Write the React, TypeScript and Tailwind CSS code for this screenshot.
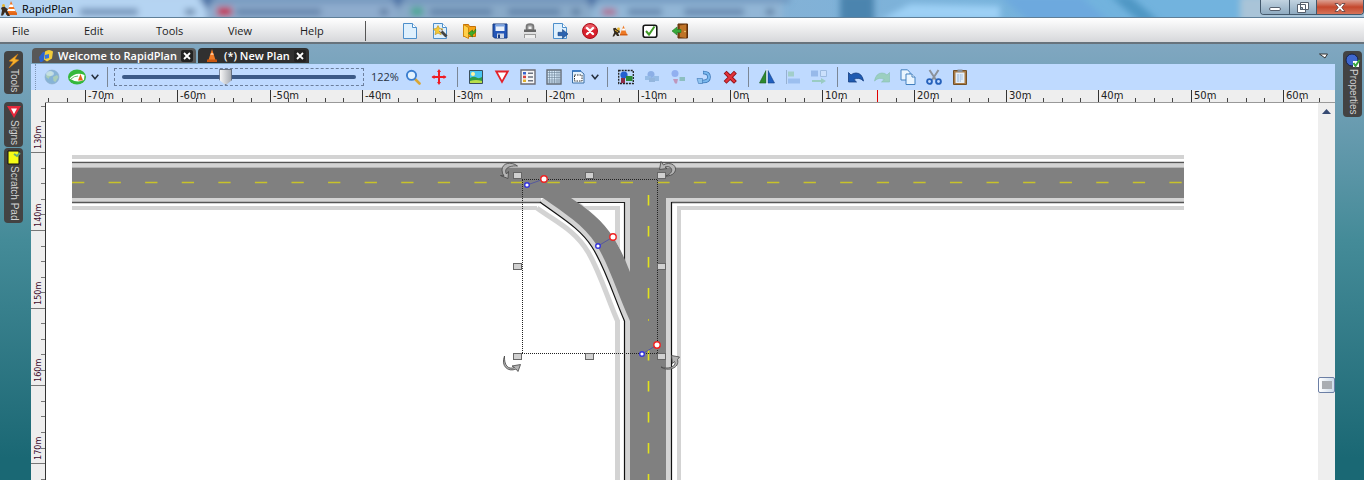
import React from "react";

type Kids = { children: React.ReactNode };

function Icon({ children, size = 16 }: Kids & { size?: number }) {
  return (
    <svg width={size} height={size} viewBox="0 0 16 16" aria-hidden="true" className="shrink-0">
      {children}
    </svg>
  );
}

const page = <path d="M1.5.5h9l4 4v11h-13z" fill="#dff0fd" stroke="#4d8fcb" />;
const pageFold = <path d="M10.5.5v4h4" fill="#fff" stroke="#4d8fcb" />;

const icons: Record<string, React.ReactNode> = {
  new: <>{page}{pageFold}</>,
  wizard: (
    <>
      {page}{pageFold}
      <path d="M6 2.500l1.600 3 3.400.4-2.400 2.400.6 3.400L6 10.100l-3 1.600.6-3.400L1.200 5.900l3.200-.4z" fill="#f5c935" stroke="#b98d1c" strokeWidth=".6" />
      <path d="M8 7l6.500 6.500" stroke="#444" strokeWidth="2.800" />
      <path d="M7.500 6.500l2 2" stroke="#ddd" strokeWidth="2.200" />
    </>
  ),
  open: (
    <>
      <path d="M1.500 1.500h5l1 2h6v10h-12z" fill="#f7a414" stroke="#c2700a" />
      <path d="M1.500 1.500l5 3v11l-5-2.500z" fill="#ffd04a" stroke="#cf860f" />
      <path d="M13.500 6c1 3-1 5-3 5.500V14l-4-3.700 4-3.300v2c1.500-.3 2.500-1.500 3-3z" fill="#3fae2b" stroke="#217915" strokeWidth=".6" />
    </>
  ),
  save: (
    <>
      <path d="M1 1h14v14H2.500L1 13.500z" fill="#2456b8" stroke="#173a80" />
      <path d="M3.500 1.500h9V8h-9z" fill="#e9f0fb" />
      <path d="M3.500 1.500h9v2h-9z" fill="#7aa2e0" />
      <path d="M5 10.500h7V15H5z" fill="#cdd6e6" />
      <path d="M6 11.500h2V15H6z" fill="#1c3c80" />
    </>
  ),
  print: (
    <>
      <path d="M4.500 7V3.500Q4.500 1 8 1t3.500 2.500V7" fill="#999" stroke="#777" strokeWidth="1.600" />
      <path d="M6.500 3.500h3V6h-3z" fill="#eee" />
      <path d="M2 6.500h12V9H2z" fill="#666" />
      <path d="M1 9.500h14v1.300H1z" fill="#ddd" />
      <path d="M2 11h12v4H2z" fill="#999" />
      <path d="M3 12h10v3H3z" fill="#eee" />
    </>
  ),
  export: (
    <>
      {page}{pageFold}
      <path d="M6 9.300h4.500V6.500L16 11l-5.500 4.500v-2.800H6z" fill="#2c63b0" stroke="#17417e" strokeWidth=".6" />
    </>
  ),
  close: (
    <>
      <circle cx="8" cy="8" r="7.500" fill="#d8202c" stroke="#a8111b" />
      <path d="M2 6a6.200 6.200 0 0 1 12 0q-6 2-12 0z" fill="#f0707a" opacity=".7" />
      <path d="M5 5l6 6M11 5l-6 6" stroke="#fff" strokeWidth="2.400" strokeLinecap="round" />
    </>
  ),
  worker: (
    <>
      <path d="M11.500 2.500l3.500 9H8z" fill="#ee7a25" />
      <path d="M10.500 5.500h2.200l.7 2h-3.700z" fill="#fff" />
      <path d="M8 11h7.500v1.500H8z" fill="#d35e12" />
      <path d="M1 5.500l2.500-.7L5 6.500l2.500 1 .5 2-2 .5 1.500 3H5L3.800 11 2 13.500H.5l1.700-4z" fill="#33291d" />
      <circle cx="6.500" cy="6" r="1.400" fill="#e8b42b" />
      <path d="M3 7l3 2" stroke="#e8b42b" />
    </>
  ),
  check: (
    <>
      <rect x="1.200" y="2.200" width="13.600" height="12" rx="2" fill="#fff" stroke="#151515" strokeWidth="1.600" />
      <path d="M4 8l3 3.500L12.500 3.500" fill="none" stroke="#3f9a26" strokeWidth="2" />
    </>
  ),
  exit: (
    <>
      <path d="M6 1h9.500v14H6z" fill="#8a4a14" stroke="#5d2f08" />
      <path d="M8 2.500l6-1v13.500l-6-1z" fill="#bf7428" />
      <circle cx="13" cy="8.500" r=".8" fill="#f9d77a" />
      <path d="M9 6.500H5V4L0 8l5 4V9.500h4z" fill="#38a83a" stroke="#1f7a22" strokeWidth=".6" />
    </>
  ),
  globe: (
    <>
      <circle cx="8" cy="8" r="7" fill="#86b3d6" stroke="#8fafca" strokeWidth=".6" />
      <path d="M2.500 5Q6 1 8 3t-1 4-2 3-3-2zM9 8l4-2 1.500 2-3 5-2-1z" fill="#a9cdb9" />
      <ellipse cx="6" cy="4.500" rx="4" ry="2.500" fill="#d9ecf8" opacity=".6" />
    </>
  ),
  streets: (
    <>
      <ellipse cx="9" cy="8" rx="9" ry="7.500" fill="#35b83c" />
      <path d="M1.500 9.500q6-7 15-3.500l-.5 5q-7 3.500-14.500-1.500z" fill="#fff" />
      <path d="M3 10q3-3 7-3" stroke="#63c268" fill="none" />
      <path d="M12.500 5l2.500 6.500h-5z" fill="#e2661c" />
    </>
  ),
  magnify: (
    <>
      <path d="M10 10l4.500 4.500" stroke="#d9a635" strokeWidth="2.600" strokeLinecap="round" />
      <circle cx="6.500" cy="6.300" r="4.600" fill="#e3f3ff" stroke="#3b7ed0" strokeWidth="1.900" />
    </>
  ),
  pan: (
    <>
      <path d="M8 2v12M1.500 8h13" stroke="#ee1c24" strokeWidth="2" />
      <path d="M8 0l2 3H6zM8 16l2-3H6zM.500 8l3-2v4zM15.500 8l-3-2v4z" fill="#ee1c24" />
    </>
  ),
  image: (
    <>
      <path d="M1.500 1.500h13v13h-13z" fill="#49c4f2" stroke="#3b4f5c" />
      <path d="M2 9q4-2 6.500-.5T14 8v6H2z" fill="#2e9b46" />
      <path d="M2 12q6-2 12 0v2H2z" fill="#b8df4a" />
      <circle cx="5" cy="5" r="2" fill="#fff3a0" />
    </>
  ),
  yield: <path d="M2.200 2.500h11.600L8 13z" fill="#fff" stroke="#e3222b" strokeWidth="1.800" />,
  legend: (
    <>
      <path d="M1 1h14v14H1z" fill="#f6f6f6" stroke="#6c6c74" strokeWidth="1.400" />
      <path d="M3 3h3v2.500H3z" fill="#3a66cf" />
      <path d="M3 6.700h3v2.500H3z" fill="#d6423f" />
      <path d="M3 10.500h3V13H3z" fill="#e0b02b" />
      <path d="M8 4.200h5M8 8h5M8 11.800h5" stroke="#6c7381" strokeWidth="1.400" />
    </>
  ),
  grid: (
    <>
      <path d="M1 1h14v14H1z" fill="#d5e8f8" stroke="#666d77" strokeWidth="1.400" />
      <path d="M3.500 1v14M6 1v14M8.500 1v14M11 1v14M13 1v14M1 3.500h14M1 6h14M1 8.500h14M1 11h14M1 13h14" stroke="#6b8196" strokeWidth=".6" />
    </>
  ),
  area: (
    <>
      <path d="M2.500 2h8l3.500 3v9H2.500z" fill="#e6f2fc" stroke="#3c70a8" />
      <path d="M4.500 6h7.500v6H4.500z" fill="#fff" stroke="#333" strokeDasharray="1.500 1" />
      <path d="M2 2h9" stroke="#2c6fbc" strokeWidth="1.500" />
    </>
  ),
  group: (
    <>
      <path d="M.700 1.500h14.600v13H.7z" fill="none" stroke="#222" strokeWidth="1.300" strokeDasharray="2 1" />
      <circle cx="6" cy="6" r="3.600" fill="#2460cf" />
      <path d="M8 7h6.500v5H8z" fill="#2c8a36" />
      <path d="M3 9h4v5H3z" fill="#8b2d46" />
    </>
  ),
  front: (
    <g opacity=".5">
      <circle cx="7" cy="5.500" r="3.500" fill="#5b86cf" />
      <path d="M1 7h6v4H1zM9 7h6v5H9z" fill="#6f9fcf" />
      <path d="M5 9h6v4H5z" fill="#6b93bd" />
    </g>
  ),
  back: (
    <g opacity=".45">
      <circle cx="5" cy="4.500" r="3.500" fill="#5b7ee0" />
      <path d="M9.500 8H15v4H9.500z" fill="#4fa074" />
      <path d="M3 10h5l-1 4.500H5z" fill="#c0476c" />
    </g>
  ),
  rotate: (
    <>
      <path d="M7 3.500Q13 3.500 13 8T7 12.500H4" fill="none" stroke="#3a74b4" strokeWidth="3.600" />
      <path d="M7.500 3.500Q13 3.500 13 8T7 12.500H3.500" fill="none" stroke="#79b8ee" strokeWidth="2.200" />
      <path d="M1 9.500h5.500v5H2.500z" fill="#8fc4f0" stroke="#3a74b4" strokeWidth=".6" />
    </>
  ),
  remove: (
    <>
      <path d="M4.500 4.500l7.500 7.500M12 4.500L4.500 12" stroke="#8c1116" strokeWidth="4" strokeLinecap="square" />
      <path d="M4.500 4.500l7.500 7.500M12 4.500L4.500 12" stroke="#e3323a" strokeWidth="2.400" strokeLinecap="square" />
    </>
  ),
  mirror: (
    <>
      <path d="M7 1.500v12.500H.500z" fill="#2f8a2f" stroke="#1c5b1f" strokeWidth=".6" />
      <path d="M9 1.500v12.500h6.500z" fill="#1f5fc0" stroke="#153f85" strokeWidth=".6" />
      <path d="M8 0v16" stroke="#e5ecf5" />
    </>
  ),
  align: (
    <g opacity=".6">
      <path d="M1.500 1v14" stroke="#7d97b4" />
      <path d="M3 2.500h6v5H3z" fill="#8fc7a8" />
      <path d="M3 9.500h12v5H3z" fill="#85aee6" />
    </g>
  ),
  spread: (
    <g opacity=".6">
      <path d="M0 1.500h7v6H0z" fill="#7da4dd" />
      <path d="M9.500 1.500h6v6h-6z" fill="#d3e4fb" stroke="#88a8cc" />
      <path d="M1 11h9V9l5 3-5 3v-2H1z" fill="#83c49c" />
    </g>
  ),
  undo: <path d="M.500 3.500v9.500h8L5.800 10.500Q11 7.500 15.500 12 14 4 8 4 5 4 3 6z" fill="#1f5bb2" stroke="#143e80" strokeWidth=".8" />,
  redo: <path d="M15.500 3.500v9.500h-8l2.700-2.500Q5 7.500.5 12 2 4 8 4q3 0 5 2z" fill="#9bcfc0" stroke="#86bfae" strokeWidth=".6" />,
  copy: (
    <>
      <path d="M1 .800h6.500L10 3.500V11H1z" fill="#eaf5fe" stroke="#4380bf" />
      <path d="M6 5h6l3 3v7.500H6z" fill="#eaf5fe" stroke="#4380bf" />
      <path d="M12 5v3h3" fill="#fff" stroke="#4380bf" />
    </>
  ),
  cut: (
    <>
      <path d="M3.500 1l6.500 10M12.500 1L6 11" stroke="#8b929b" strokeWidth="2" />
      <circle cx="3.500" cy="12.500" r="2.400" fill="none" stroke="#2561bb" strokeWidth="1.900" />
      <circle cx="12.500" cy="12.500" r="2.400" fill="none" stroke="#2561bb" strokeWidth="1.900" />
    </>
  ),
  paste: (
    <>
      <path d="M1.500 1.500h13v14h-13z" fill="#a87a45" stroke="#725027" />
      <path d="M3.500 3.500h9v10.500h-9z" fill="#e3eefa" />
      <path d="M5 6h6M5 8h6M5 10h6M5 12h4" stroke="#8fb0d6" strokeDasharray="2 .7" />
      <path d="M5.500.500h5v2.500h-5z" fill="#888f98" />
    </>
  ),
};

const fileActions: [string, string][] = [
  ["new", "New"], ["wizard", "Plan wizard"], ["open", "Open"], ["save", "Save"], ["print", "Print"],
  ["export", "Export"], ["close", "Close"], ["worker", "Work zone"], ["check", "Validate"], ["exit", "Exit"],
];

function Tool({ name, label, className = "w-[26px]" }: { name: string; label: string; className?: string }) {
  return (
    <button type="button" aria-label={label} className={`flex h-6 shrink-0 items-center justify-center ${className}`}>
      {name === "streets" ? (
        <svg width="18" height="16" viewBox="0 0 18 16" aria-hidden="true">{icons.streets}</svg>
      ) : (
        <Icon>{icons[name]}</Icon>
      )}
    </button>
  );
}

function Separator({ className = "w-[11px]" }: { className?: string }) {
  return (
    <span className={`flex h-5 shrink-0 justify-center ${className}`}>
      <span className="w-px bg-[#7b8796]" />
    </span>
  );
}

function Caret({ className }: { className: string }) {
  return (
    <button type="button" aria-label="More options" className={`flex h-6 shrink-0 items-center justify-center ${className}`}>
      <svg width="8" height="6" viewBox="0 0 8 6"><path d="M.700.800L4 4.800 7.300.8" fill="none" stroke="#26303f" strokeWidth="1.500" /></svg>
    </button>
  );
}

function TitleBar() {
  return (
    <header className="relative flex h-[18px] shrink-0 items-start justify-between overflow-hidden border-b border-[#5f7f98] bg-linear-to-r from-[#bcd6ee] from-0% via-[#8fb0d0] via-40% to-[#72b3de] to-80%">
      <svg className="absolute inset-0 h-full w-full" aria-hidden="true">
        <defs>
          <filter id="soft" x="-20%" y="-100%" width="140%" height="300%"><feGaussianBlur stdDeviation="3" /></filter>
        </defs>
        <g filter="url(#soft)">
          <rect x="-10" y="-4" width="216" height="28" fill="#b5d4f2" />
          <rect x="206" y="-4" width="190" height="28" fill="#8eaccd" />
          <rect x="396" y="-4" width="196" height="28" fill="#88a9c8" />
          <rect x="592" y="-4" width="190" height="28" fill="#92b6d6" />
          <path d="M198-6h18l-9 16zM390-6h16l-8 15zM584-6h16l-8 15z" fill="#3e639c" />
          <rect x="200" y="-4" width="590" height="7" fill="#5f86b1" opacity=".6" />
          <rect x="840" y="-6" width="34" height="32" fill="#4c84ae" />
          <path d="M880 20h120V6l-90-2z" fill="#9dd0f5" />
          <path d="M1000-4h80l30 26h-80z" fill="#6da9de" />
          <path d="M1110-4h20l30 26h-20z" fill="#4f97c4" />
          <rect x="1240" y="-4" width="140" height="28" fill="#a9c4d8" />
          <path d="M80 12h58M236 12h85M430 12h62M508 12h52M628 12h34M684 12h60" stroke="#56779f" strokeWidth="7" opacity=".7" />
          <path d="M185 12h10M380 12h8M572 12h8M766 12h8" stroke="#4d6c92" strokeWidth="6" opacity=".8" />
          <rect x="217" y="7" width="15" height="9" fill="#c22a50" />
          <rect x="411" y="7" width="12" height="9" fill="#4aa694" />
          <rect x="602" y="9" width="14" height="6" fill="#b45f85" />
        </g>
      </svg>
      <div className="relative flex h-[17px] items-center gap-[5px] pl-px">
        <Icon>
          <path d="M10 0l5.500 12H6z" fill="#f07522" />
          <path d="M8.800 3.500h2.800l1 2.500H7.800zM7 8h6.500l.8 2H6.200z" fill="#fff" />
          <path d="M5 11.500h11V14H5z" fill="#e0661a" />
          <path d="M0 7l3-2 2 2 2 1-1 1.500 3 5.500H6.500L4 11l-2 3.500H0l1-5z" fill="#3a2c20" />
          <circle cx="2.500" cy="4.500" r="1.500" fill="#e8b42b" />
        </Icon>
        <h1 className="text-[11px] leading-4 text-black">RapidPlan</h1>
      </div>
      <div className="relative flex h-[15px] overflow-hidden rounded-b border border-t-0 border-[#43586b]">
        <button type="button" aria-label="Minimize" className="flex w-7 items-center justify-center bg-linear-to-b from-[#c2d3e0] to-[#8fabc1]">
          <span className="mt-1 h-1 w-3 rounded-xs border border-[#555f6d] bg-white" />
        </button>
        <button type="button" aria-label="Restore" className="flex w-7 items-center justify-center border-x border-[#43586b] bg-linear-to-b from-[#c2d3e0] to-[#8fabc1]">
          <svg width="12" height="11" viewBox="0 0 12 11">
            <path d="M3.500.500h8v7h-8zM.500 2.500h8v8h-8z" fill="#fff" stroke="#555f6d" />
            <path d="M3.500 5.500h2v2h-2z" fill="#9bb3c7" stroke="#555f6d" />
          </svg>
        </button>
        <button type="button" aria-label="Close window" className="flex w-[46px] items-center justify-center bg-linear-to-b from-[#dba092] via-[#c4472c] to-[#d67359]">
          <svg width="12" height="9" viewBox="0 0 12 9">
            <path d="M1 .500h3l2 2.300L8 .5h3L7.800 4.500 11 8.500H8L6 6.200 4 8.500H1l3.200-4z" fill="#fff" stroke="#5b3a3c" strokeWidth=".8" />
          </svg>
        </button>
      </div>
    </header>
  );
}

function MenuBar() {
  return (
    <div className="flex h-[26px] shrink-0 items-center border-b-2 border-[#68737c] bg-linear-to-b from-white to-[#d6d7da] pt-px">
      <nav className="flex">
        {["File", "Edit", "Tools", "View", "Help"].map((m) => (
          <button key={m} type="button" className="w-[72px] pl-3 text-left text-[11px] leading-4 text-[#1c1c1c]">{m}</button>
        ))}
      </nav>
      <span className="mr-[29px] ml-[5px] h-5 w-px bg-[#555]" />
      {fileActions.map(([name, label]) => <Tool key={name} name={name} label={label} className="w-[30px]" />)}
    </div>
  );
}

function SideTab({ label, children }: Kids & { label: string }) {
  return (
    <button type="button" className="flex w-[19px] flex-col items-center rounded-sm bg-[#434343] py-[2px]">
      {children}
      <span className="font-['Liberation_Sans',sans-serif] text-[10px] leading-4 text-[#d2d2d2] [writing-mode:vertical-rl]">{label}</span>
    </button>
  );
}

function DocTab({ label, active, children }: Kids & { label: string; active?: boolean }) {
  return (
    <div className={`flex h-[15px] items-center rounded-t-sm pr-[3px] pl-[6px] ${active ? "bg-[#303030]" : "bg-[#585858]"}`}>
      <button type="button" role="tab" aria-selected={!!active} className="flex items-center gap-1 text-[11px] leading-[15px] font-semibold text-white">
        <Icon>{children}</Icon>
        {label}
      </button>
      <button type="button" aria-label={`Close ${label}`} className="ml-1 flex h-3 w-3 items-center justify-center rounded-xs bg-[#222]">
        <svg width="8" height="8" viewBox="0 0 8 8"><path d="M1 1l6 6M7 1L1 7" stroke="#fff" strokeWidth="1.800" /></svg>
      </button>
    </div>
  );
}

function Toolbar() {
  return (
    <div className="flex h-[26px] shrink-0 items-center overflow-hidden bg-[#bfdaff]">
      <span className="mr-[3px] ml-1 h-full border-l border-dotted border-[#7f95b5]" />
      <Tool name="globe" label="Map" />
      <Tool name="streets" label="Street map" className="w-6" />
      <Caret className="w-3" />
      <Separator className="w-[13px]" />
      <label className="flex h-[18px] w-[250px] shrink-0 items-center justify-center border border-dashed border-[#6c7f9c]">
        <input
          type="range"
          aria-label="Zoom"
          defaultValue={44}
          className="h-4 w-[234px] appearance-none bg-transparent [&::-webkit-slider-runnable-track]:h-1 [&::-webkit-slider-runnable-track]:rounded-full [&::-webkit-slider-runnable-track]:bg-[#3c5a87] [&::-webkit-slider-thumb]:mt-[-6px] [&::-webkit-slider-thumb]:h-4 [&::-webkit-slider-thumb]:w-[13px] [&::-webkit-slider-thumb]:appearance-none [&::-webkit-slider-thumb]:border [&::-webkit-slider-thumb]:border-[#667080] [&::-webkit-slider-thumb]:bg-linear-to-r [&::-webkit-slider-thumb]:from-[#f7f7f7] [&::-webkit-slider-thumb]:to-[#a9adb3] [&::-webkit-slider-thumb]:[clip-path:polygon(0_0,100%_0,100%_68%,50%_100%,0_68%)]"
        />
      </label>
      <output className="w-9 shrink-0 pl-[7px] text-[11px] leading-4 text-[#27313f]">122%</output>
      <Tool name="magnify" label="Zoom window" />
      <Tool name="pan" label="Pan" />
      <Separator />
      <Tool name="image" label="Background image" />
      <Tool name="yield" label="Sign" />
      <Tool name="legend" label="Legend" />
      <Tool name="grid" label="Grid" />
      <Tool name="area" label="Print area" className="w-[22px]" />
      <Caret className="w-3" />
      <Separator className="w-3" />
      <Tool name="group" label="Group" />
      <Tool name="front" label="Bring to front" />
      <Tool name="back" label="Send to back" />
      <Tool name="rotate" label="Rotate" />
      <Tool name="remove" label="Delete" />
      <Separator />
      <Tool name="mirror" label="Mirror" />
      <Tool name="align" label="Align" />
      <Tool name="spread" label="Distribute" />
      <Separator />
      <Tool name="undo" label="Undo" />
      <Tool name="redo" label="Redo" />
      <Tool name="copy" label="Copy" />
      <Tool name="cut" label="Cut" />
      <Tool name="paste" label="Paste" />
    </div>
  );
}

const H_STEP = 92.1;
const V_STEP = 77.7;

function HorizontalRuler() {
  const zero = 699;
  const width = window.innerWidth - 60;
  const count = Math.floor((width - 30 - zero) / H_STEP) + 8;
  const majors = Array.from({ length: Math.max(count, 0) }, (_, i) => i - 7);
  const minors = Array.from({ length: Math.ceil(width / (H_STEP / 5)) }, (_, i) => i - 37);
  return (
    <svg className="h-[13px] w-full shrink-0 bg-[#eee]" aria-label="Horizontal ruler">
      {minors.map((i) => {
        const x = Math.round(zero + (i * H_STEP) / 5);
        return x >= 15 && <path key={i} d={`M${x + 0.5} 8v4`} stroke="#444" />;
      })}
      {majors.map((i) => {
        const x = Math.round(zero + i * H_STEP);
        return (
          <g key={i}>
            <path d={`M${x + 0.5} 0v12`} stroke="#333" />
            <text x={x + 3} y="9" fill="#222" className="font-['DejaVu_Sans'] text-[10px]">{`${i * 10}m`}</text>
          </g>
        );
      })}
      <path d="M846.500 0v12" stroke="#e00000" />
      <rect x="14" y="12" width="100%" height="1" fill="#999" />
    </svg>
  );
}

function VerticalRuler() {
  const first = 49.3;
  const height = window.innerHeight - 103;
  const majors = Array.from({ length: Math.max(Math.floor((height - first) / V_STEP) + 1, 0) }, (_, i) => i);
  const minors = Array.from({ length: Math.ceil(height / (V_STEP / 5)) + 1 }, (_, i) => i - 3);
  return (
    <svg className="w-[15px] shrink-0 bg-[#eee]" aria-label="Vertical ruler">
      {minors.map((i) => {
        const y = Math.round(first + (i * V_STEP) / 5);
        return <path key={i} d={`M10 ${y + 0.5}h4`} stroke="#777" />;
      })}
      {majors.map((i) => {
        const y = Math.round(first + i * V_STEP);
        return (
          <g key={i}>
            <path d={`M0 ${y + 0.5}h14`} stroke="#777" />
            <text transform={`translate(10 ${y - 3}) rotate(-90)`} fill="#3d0a2c" className="font-['DejaVu_Sans_Condensed','DejaVu_Sans'] text-[9px]">{`${130 + i * 10}m`}</text>
          </g>
        );
      })}
      <path d="M14.500 0v4000" stroke="#333" />
    </svg>
  );
}

const handles = [
  [517, 176], [589, 176], [661, 176], [517, 267], [661, 267], [517, 357], [589, 357], [661, 357],
];
const controlPairs = [
  [527, 185, 544, 179], [598, 246, 613, 237], [642, 354, 657, 345],
];

function Plan() {
  return (
    <svg className="min-w-0 flex-1 self-stretch bg-white" role="img" aria-label="Road plan">
      <g transform="translate(-46 -103)">
        <g fill="#d3d3d3">
          <path d="M72 155h1112v4H72zM72 206h465v4H72zM677 206h507v4H677z" />
          <path d="M615 320h5v600h-5zM677 206h4v714h-4z" />
          <path d="M72 163.500h1112v4H72zM72 198h469v4H72zM571 198h59v4h-59zM666 198h518v4H666z" />
          <path d="M625 198h5v74h-5zM625 320h5v600h-5zM666 198h5v722h-5z" />
        </g>
        <path d="M537 208C556 222 575 230 588 252C600 272 608 300 617.500 321" fill="none" stroke="#d3d3d3" strokeWidth="5" />
        <path d="M72 162.500h1112M72 202.500h468.500M671.500 202.500H1184" stroke="#555" strokeWidth="1.400" fill="none" />
        <path d="M624.500 320v600M671.500 202v718" stroke="#111" strokeWidth="1.200" fill="none" />
        <path d="M540 202C560 217 580 228 592 247C605 267 614 297 624.500 321L630 321V198H543z" fill="#d3d3d3" />
        <path d="M574 202.500H624.500V262L613 237Q598 216 574 198z" fill="#fff" />
        <path d="M583 206h37v43l-5-9v-30h-27z" fill="#d3d3d3" />
        <path d="M571 198h59v78l-5-12V202H574z" fill="#d3d3d3" />
        <path d="M574 202.500h50.500V262" fill="none" stroke="#222" strokeWidth="1.200" />
        <path d="M540 202C560 217 580 228 592 247C605 267 614 297 624.500 321" fill="none" stroke="#111" strokeWidth="1.200" />
        <path d="M543 198C564 213 584 225 596 244C609 265 619 297 630 321V272C624 257 620 248 613 237C603 221 588 209 571 198z" fill="#808080" />
        <path d="M72 167.500h1112V198H72zM630 190h36v730h-36z" fill="#808080" />
        <path d="M72 182.500h1112" stroke="#c8c22a" strokeWidth="1.600" strokeDasharray="12.300 24.280" />
        <path d="M648.500 195v120M648.500 350v600" stroke="#e2e21c" strokeWidth="1.600" strokeDasharray="10.500 20.500" />
        <path d="M648.500 319v2" stroke="#c8c22a" />
        <path d="M522 179.500h136M522 353.500h136M522.500 180v173M657.500 180v173" fill="none" stroke="#222" strokeDasharray="1 1" />
        {controlPairs.map(([bx, by, rx, ry]) => (
          <g key={bx} fill="#fff">
            <path d={`M${bx} ${by}L${rx} ${ry}`} stroke="#55589e" />
            <circle cx={bx} cy={by} r="2.300" stroke="#3434dc" strokeWidth="1.400" />
            <circle cx={rx} cy={ry} r="3.200" stroke="#ee2222" strokeWidth="1.400" />
          </g>
        ))}
        {handles.map(([x, y]) => (
          <rect key={`${x}-${y}`} x={x - 3.5} y={y - 3.5} width="8" height="6" fill="#d0d0d0" stroke="#666" />
        ))}
        <g fill="#b4b4b4" stroke="#444" strokeWidth=".8">
          <path d="M517.500 166C511 161 502 163 502 170Q502 173.500 504 176L500.500 175.500 508 178.500 508.500 171.500 506.500 174C504.500 171 505 165.500 517.500 166z" />
          <path d="M666 176C678 176 678.500 163.500 668.500 163.500Q665.500 163.500 663.500 165L661 161.500 659.500 169.500 667 168.500 665 167C671 164.500 676 172 666 176z" />
          <path d="M504.500 356C500.500 366 508 372.500 516 369L518 371.500 520.500 364.500 512 366 514.500 367.500C508 370 504 365 504.500 356z" />
          <path d="M661 367C668 372 680 368 677.500 359.500L679.500 357 671.500 355.500 672.500 363.500 674.500 361.500C677 366 669 370 661 367z" />
        </g>
      </g>
    </svg>
  );
}

function ScrollBar() {
  return (
    <div className="flex w-[17px] shrink-0 flex-col items-center bg-[#eee]">
      <button type="button" aria-label="Scroll up" className="flex h-4 w-full shrink-0 items-center justify-center">
        <svg width="9" height="5" viewBox="0 0 9 5"><path d="M0 5l4.500-5L9 5z" fill="#364a72" /></svg>
      </button>
      <span className="grow-[71]" />
      <span className="flex h-4 w-full shrink-0 items-center justify-center rounded-xs border border-[#6c7fa5] bg-linear-to-r from-white to-[#cddbea]">
        <span className="h-2 w-[10px] bg-[#a9adb2]" />
      </span>
      <span className="grow-[24]" />
    </div>
  );
}

export default function App() {
  return (
    <div className="flex h-screen flex-col overflow-hidden bg-white font-['Open_Sans','Noto_Sans',sans-serif]">
      <TitleBar />
      <MenuBar />
      <div className="flex min-h-0 flex-1 bg-linear-to-b from-[#80a7c1] from-0% via-[#448b98] via-45% to-[#1a6874] to-95%">
        <aside className="flex w-[31px] shrink-0 flex-col items-center gap-2 pt-[7px] pr-1">
          <SideTab label="Tools">
            <Icon><path d="M12 1L3 8l4 .8L3 15l10-8-4-1z" fill="#f6b12c" stroke="#cb7412" strokeWidth=".5" /></Icon>
          </SideTab>
          <div className="flex flex-col gap-px">
            <SideTab label="Signs">
              <Icon><path d="M1 2h14L8 14z" fill="#e6283b" /><path d="M5 4.500h6L8 10z" fill="#fff" /></Icon>
            </SideTab>
            <SideTab label="Scratch Pad">
              <Icon><path d="M2 1h11v13H2z" fill="#f4fb16" stroke="#111" /><path d="M8 4l3 2 3-3" fill="none" stroke="#67a878" strokeWidth="2" /></Icon>
            </SideTab>
          </div>
        </aside>
        <main className="flex min-w-0 flex-1 flex-col">
          <div className="flex h-5 shrink-0 items-center justify-between pt-[3px] pr-[6px] pl-px">
            <div role="tablist" className="flex gap-[2px]">
              <DocTab label="Welcome to RapidPlan">
                <path d="M1 9l4-5h4l-1 6-4 4H2z" fill="#2b63cf" />
                <path d="M7 3.500q4-3 8 0l-1 7-5 3-3-2z" fill="#f1cc3b" />
                <path d="M7 7l4-1v4l-4 1z" fill="#3776dd" />
              </DocTab>
              <DocTab label="(*) New Plan" active>
                <path d="M8 1l3.500 11h-7z" fill="#f07a26" />
                <path d="M3 11.500h10V14H3z" fill="#c9560f" />
                <path d="M7 5h2l.7 2H6.300z" fill="#ffc08e" />
              </DocTab>
            </div>
            <button type="button" aria-label="Tab list" className="flex h-3 w-3 items-center justify-center">
              <svg width="9" height="6" viewBox="0 0 9 6"><path d="M.500 1h8L6 5z" fill="#fff" stroke="#333" /></svg>
            </button>
          </div>
          <Toolbar />
          <HorizontalRuler />
          <div className="flex min-h-0 flex-1">
            <VerticalRuler />
            <Plan />
            <ScrollBar />
          </div>
        </main>
        <aside className="flex w-[29px] shrink-0 flex-col items-center pt-[7px] pl-[6px]">
          <SideTab label="Properties">
            <Icon><circle cx="7" cy="7" r="6" fill="#3f67cd" stroke="#14224c" /><path d="M8 8h6v6H8z" fill="#fff" /><path d="M8.500 10l2 3 4-6" fill="none" stroke="#35a63b" strokeWidth="2" /></Icon>
          </SideTab>
        </aside>
      </div>
    </div>
  );
}
